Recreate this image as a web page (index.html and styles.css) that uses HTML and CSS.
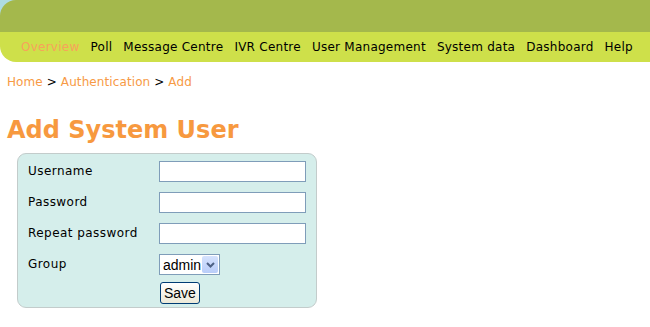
FILE: index.html
```html
<!DOCTYPE html>
<html lang="en">
<head>
  <meta charset="UTF-8" />
  <title>Add System User</title>
  <link rel="stylesheet" href="styles.css">
</head>
<body>
  <div class="top">
    <header>
      <div class="banner"></div>
      <nav class="menu">
        <a href="#" class="active">Overview</a>
        <a href="#">Poll</a>
        <a href="#">Message Centre</a>
        <a href="#">IVR Centre</a>
        <a href="#">User Management</a>
        <a href="#">System data</a>
        <a href="#">Dashboard</a>
        <a href="#">Help</a>
      </nav>
    </header>
  </div>

  <div class="crumbs">
    <a href="#">Home</a> &gt; <a href="#">Authentication</a> &gt; <a href="#">Add</a>
  </div>

  <h1>Add System User</h1>

  <form class="user-form">
    <label for="username">Username</label>
    <input type="text" id="username">

    <label for="password">Password</label>
    <input type="password" id="password">

    <label for="repeat">Repeat password</label>
    <input type="password" id="repeat">

    <label for="group">Group</label>
    <span class="select-wrap">
      <select id="group">
        <option>admin</option>
      </select>
      <span class="select-arrow">
        <svg width="9" height="6" viewBox="0 0 9 6"><path d="M1 1 L4.5 4.5 L8 1" fill="none" stroke="#4d6185" stroke-width="2"/></svg>
      </span>
    </span>

    <span></span>
    <button type="button" class="save">Save</button>
  </form>
</body>
</html>
```

FILE: styles.css
```css
body {
  margin: 0;
  font-family: 'DejaVu Sans', Verdana, sans-serif;
  font-size: 12px;
  color: #000;
  background: #fff;
}

a {
  text-decoration: none;
  color: #f79a45;
}

.top {
  background: linear-gradient(#aedbe2 50%, #fff 50%);
}

header {
  border-radius: 16px 0 0 16px;
  overflow: hidden;
}

.banner {
  height: 32px;
  background-color: #a4b84c;
}

.menu {
  height: 30px;
  background-color: #cee04a;
  display: flex;
  align-items: center;
  gap: 11px;
  padding-left: 21px;
  letter-spacing: 0.25px;
}

.menu a {
  color: #000;
}

.menu a.active {
  color: #f7a35a;
}

.crumbs {
  margin: 13px 0 0 7px;
  line-height: 15px;
  letter-spacing: 0.1px;
}

h1 {
  margin: 25px 0 0 7px;
  font-size: 24px;
  line-height: 30px;
  color: #f7993f;
}

.user-form {
  margin: 8px 0 0 17px;
  width: 278px;
  padding: 7px 10px 3px 10px;
  background-color: #d5eeeb;
  border: 1px solid #c3cccb;
  border-radius: 9px;
  display: grid;
  grid-template-columns: 131px 147px;
  row-gap: 10px;
  align-items: center;
}

.user-form label {
  padding-bottom: 2px;
  letter-spacing: 0.45px;
}

.user-form input {
  box-sizing: border-box;
  width: 147px;
  height: 21px;
  margin: 0;
  border: 1px solid #7f9db9;
  background: #fff;
}

.select-wrap {
  position: relative;
  width: 61px;
  height: 21px;
}

.select-wrap select {
  appearance: none;
  box-sizing: border-box;
  width: 61px;
  height: 21px;
  margin: 0;
  padding: 0 0 0 3px;
  border: 1px solid #7f9db9;
  background: #fff;
  font-family: 'Liberation Sans', Arial, sans-serif;
  font-size: 14px;
  color: #000;
}

.select-arrow {
  position: absolute;
  top: 2px;
  right: 2px;
  width: 16px;
  height: 17px;
  background: linear-gradient(#d5e2fd, #b9cdf9);
  border-radius: 2px;
  display: flex;
  align-items: center;
  justify-content: center;
}

.save {
  justify-self: start;
  margin: -3px 0 0 1px;
  height: 22px;
  padding: 0 3px;
  border: 1px solid #003c74;
  border-radius: 3px;
  background: linear-gradient(#ffffff, #ece9d8);
  font-family: 'Liberation Sans', Arial, sans-serif;
  font-size: 14px;
  color: #000;
}
```
